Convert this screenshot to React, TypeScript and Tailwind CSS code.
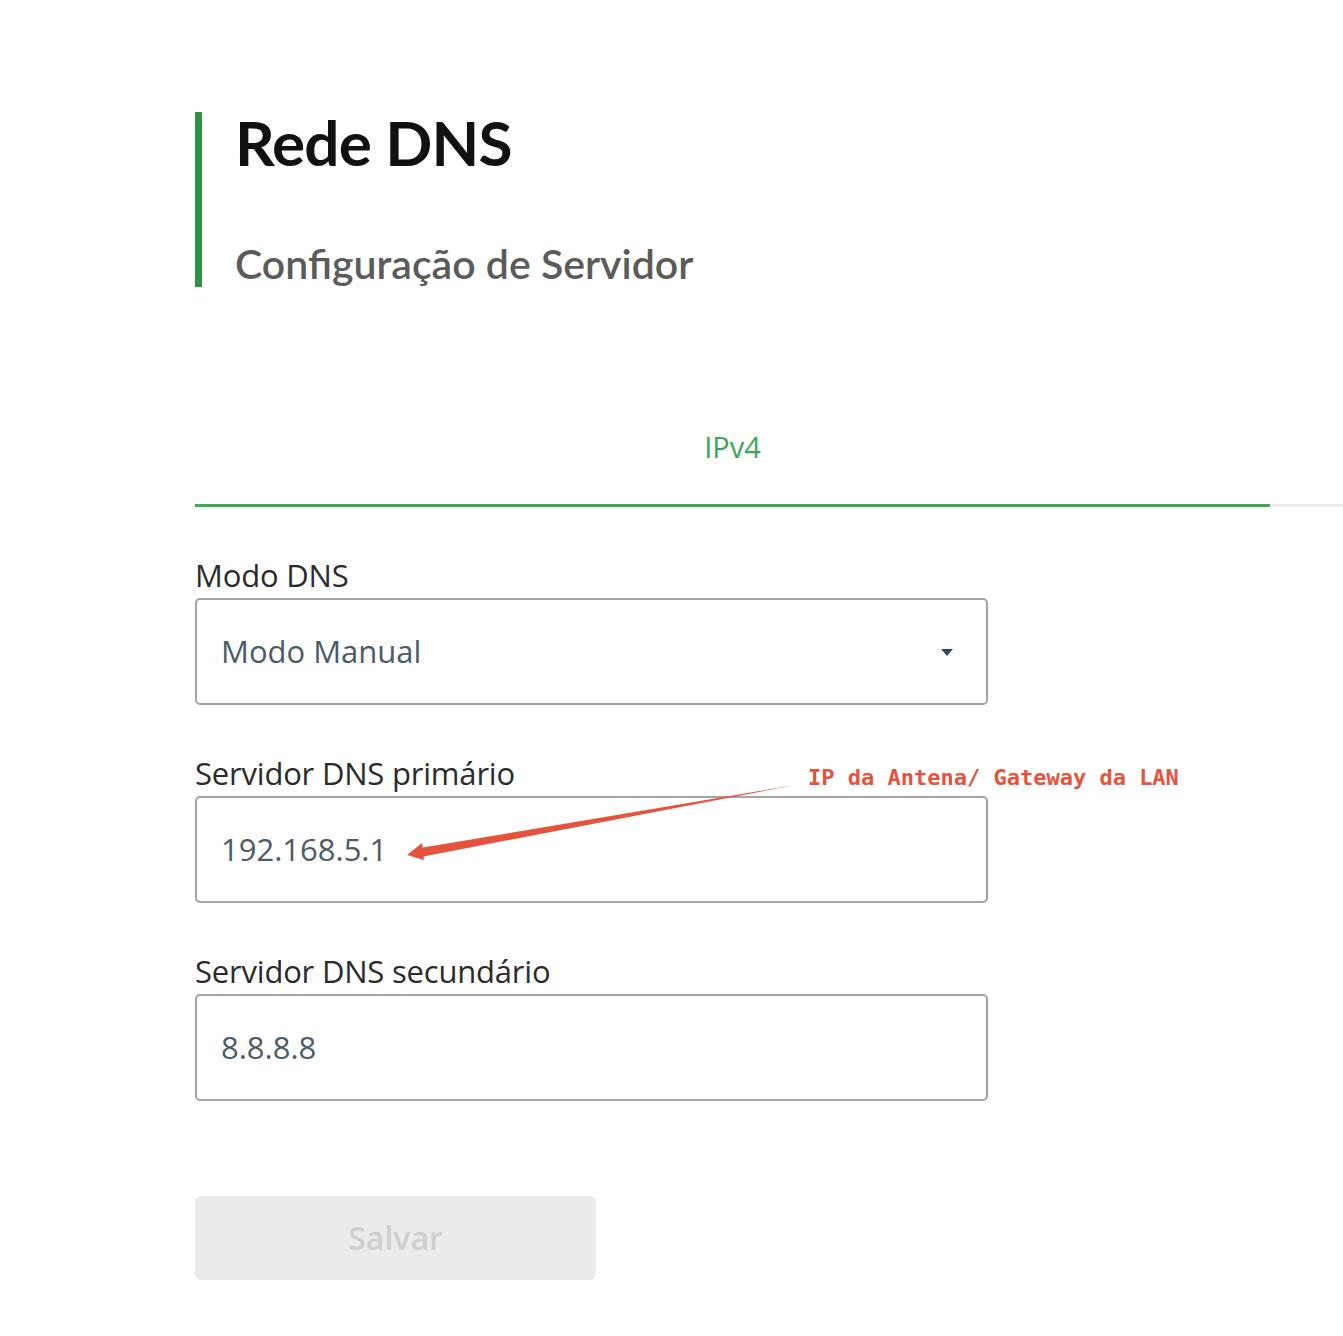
import { ReactNode } from "react";

const titleFont = { fontFamily: "Lato, 'Noto Sans', sans-serif" };
const bodyFont = { fontFamily: "'Open Sans', 'Noto Sans', sans-serif" };

const Field = ({ label, children, className }: { label: string; children: ReactNode; className?: string }) => (
  <div className={className} style={bodyFont}>
    <div className="mb-[5px] h-[36px] text-[31px] font-medium leading-[36px] tracking-[-0.2px] text-[#2b2b2b]">{label}</div>
    <div className="flex h-[107px] w-[793px] items-center rounded-[5px] border-2 border-[#a3a3a3] pl-[24px] pr-[33px] text-[31px] text-[#4b5b68]">
      {children}
    </div>
  </div>
);

const App = () => (
  <div className="relative min-h-[1336px] w-[1343px] overflow-hidden bg-white" style={titleFont}>
    <div className="pl-[195px] pt-[112px]">
      <div className="flex h-[175px] flex-col justify-between border-l-[7px] border-[#2e9445] pl-[33px]">
        <h1 className="mt-[-6px] text-[62px] font-bold leading-[72px] tracking-[-0.8px] text-[#111]">Rede DNS</h1>
        <h2 className="mb-[-1px] text-[41px] font-semibold leading-[48px] text-[#5b5b5b]">Configuração de Servidor</h2>
      </div>

      <div className="mt-[143px] flex items-end">
        <div className="flex w-[1075px] flex-col items-center border-b-[3px] border-[#3aaa52]">
          <span className="pb-[40px] text-[29px] leading-[34px] text-[#3aa757]" style={bodyFont}>
            IPv4
          </span>
        </div>
        <div className="h-[3px] flex-1 bg-[#ececec]" />
      </div>

      <Field label="Modo DNS" className="mt-[50px]">
        <span className="flex-1">Modo Manual</span>
        <svg width="12" height="8" viewBox="0 0 12 8" className="mt-[2px]">
          <path d="M0 0 L12 0 L6 7 Z" fill="#34495e" />
        </svg>
      </Field>

      <Field label="Servidor DNS primário" className="mt-[50px]">
        <span>192.168.5.1</span>
      </Field>

      <Field label="Servidor DNS secundário" className="mt-[50px]">
        <span>8.8.8.8</span>
      </Field>

      <button
        type="button"
        disabled
        className="mt-[95px] flex h-[84px] w-[401px] items-center justify-center rounded-[6px] bg-[#ebebeb] text-[32px] font-semibold text-[#cfcfcf]"
        style={bodyFont}
      >
        Salvar
      </button>
    </div>

    <div
      className="absolute left-[808px] top-[764px] text-[22px] font-bold leading-[28px] text-[#e5533d]"
      style={{ fontFamily: "'DejaVu Sans Mono', 'Liberation Mono', monospace" }}
    >
      IP da Antena/ Gateway da LAN
    </div>
    <svg className="absolute left-0 top-0" width="1343" height="1336" viewBox="0 0 1343 1336">
      <path d="M795 785 L420 848 L421 857 Z" fill="#e5533d" />
      <path d="M407 855 L422 843 L424 860 Z" fill="#e5533d" />
    </svg>
  </div>
);

export default App;
